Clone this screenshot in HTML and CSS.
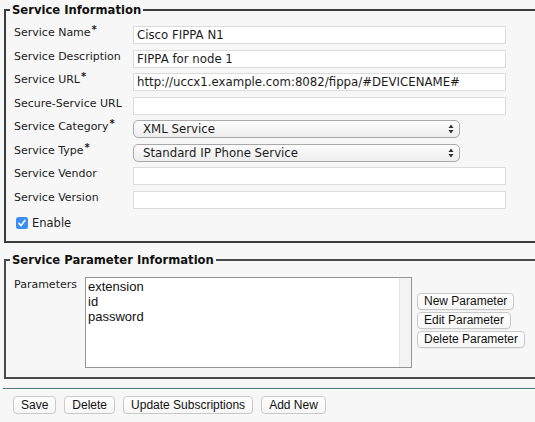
FILE: index.html
```html
<!DOCTYPE html>
<html lang="en">
    <head>
        <meta charset="UTF-8">
        <link rel="stylesheet" href="styles.css">
    </head>
    <body>
        <form class="service-form" action="#">
            <!-- Basic service settings -->
            <fieldset class="group">
                <legend>Service Information</legend>
                <div class="form-grid">
                    <label class="field-label">Service Name<span class="req">*</span></label>
                    <input class="text-input" type="text" value="Cisco FIPPA N1">

                    <label class="field-label">Service Description</label>
                    <input class="text-input" type="text" value="FIPPA for node 1">

                    <label class="field-label">Service URL<span class="req">*</span></label>
                    <input class="text-input" type="text" value="http://uccx1.example.com:8082/fippa/#DEVICENAME#">

                    <label class="field-label">Secure-Service URL</label>
                    <input class="text-input" type="text" value="">

                    <label class="field-label">Service Category<span class="req">*</span></label>
                    <div class="select-box">
                        <span>XML Service</span>
                        <svg class="select-arrows" width="6" height="10" viewBox="0 0 6 10">
                            <path d="M0.5 4 L3 0.6 L5.5 4 Z M0.5 6 L3 9.4 L5.5 6 Z" fill="#333"/>
                        </svg>
                    </div>

                    <label class="field-label">Service Type<span class="req">*</span></label>
                    <div class="select-box">
                        <span>Standard IP Phone Service</span>
                        <svg class="select-arrows" width="6" height="10" viewBox="0 0 6 10">
                            <path d="M0.5 4 L3 0.6 L5.5 4 Z M0.5 6 L3 9.4 L5.5 6 Z" fill="#333"/>
                        </svg>
                    </div>

                    <label class="field-label">Service Vendor</label>
                    <input class="text-input" type="text" value="">

                    <label class="field-label">Service Version</label>
                    <input class="text-input" type="text" value="">

                    <div class="check-row">
                        <svg class="checkbox" width="12" height="12" viewBox="0 0 12 12">
                            <rect x="0" y="0" width="12" height="12" rx="2.5" fill="#3b8ef5"/>
                            <path d="M3 6.4 L5.1 8.6 L9 3.3" fill="none" stroke="#fff" stroke-width="1.6" stroke-linecap="round" stroke-linejoin="round"/>
                        </svg>
                        <span>Enable</span>
                    </div>
                </div>
            </fieldset>

            <!-- Parameters attached to the service -->
            <fieldset class="group group-params">
                <legend>Service Parameter Information</legend>
                <div class="param-row">
                    <label class="field-label">Parameters</label>
                    <div class="listbox">
                        <div class="list-items">
                            <div>extension</div>
                            <div>id</div>
                            <div>password</div>
                        </div>
                        <div class="list-track"></div>
                    </div>
                    <div class="param-buttons">
                        <button type="button" class="btn">New Parameter</button>
                        <button type="button" class="btn">Edit Parameter</button>
                        <button type="button" class="btn">Delete Parameter</button>
                    </div>
                </div>
            </fieldset>

            <div class="action-bar">
                <button type="button" class="btn">Save</button>
                <button type="button" class="btn">Delete</button>
                <button type="button" class="btn">Update Subscriptions</button>
                <button type="button" class="btn">Add New</button>
            </div>
        </form>
    </body>
</html>
```

FILE: styles.css
```css
html {
    background-color: #f7f7f7;
}

body {
    margin: 0;
    padding: 3px 0 0 3px;
    overflow-x: hidden;
    font-family: "DejaVu Sans", Verdana, sans-serif;
    font-size: 11px;
    color: #1c1c1c;
}

.service-form {
    width: 600px;
}

.group {
    margin: 0 0 0 1px;
    padding: 9px 8px 11px 8px;
    border: 2px solid #3c3c3c;
    min-width: 0;
}

.group legend {
    margin-left: -4px;
    padding: 0 2px;
    font-size: 11.6px;
    font-weight: bold;
    line-height: 14px;
    color: #111;
}

.group-params {
    margin-top: 10px;
    padding-top: 10px;
    padding-bottom: 9px;
    border-color: #4a4a4a;
}

.form-grid {
    display: grid;
    grid-template-columns: 119px 373px;
    row-gap: 5.5px;
    align-items: start;
}

.field-label {
    line-height: 14px;
    white-space: nowrap;
}

.req {
    font-size: 10px;
    font-weight: bold;
    vertical-align: 3px;
    margin-left: 1px;
    line-height: 0;
}

.text-input {
    box-sizing: border-box;
    width: 373px;
    height: 18px;
    margin: 0;
    padding: 0 3px;
    border: 1px solid #dcdcdc;
    background-color: #fff;
    font-family: "DejaVu Sans", Verdana, sans-serif;
    font-size: 11.75px;
    color: #1c1c1c;
    outline: none;
}

.select-box {
    box-sizing: border-box;
    width: 327px;
    height: 18px;
    display: flex;
    align-items: center;
    justify-content: space-between;
    padding: 0 5px 0 9px;
    border: 1px solid #a9a9a9;
    border-radius: 5px;
    background: linear-gradient(#fdfdfd, #ededed);
    font-size: 11.75px;
}

.check-row {
    grid-column: 1 / 3;
    display: flex;
    align-items: center;
    gap: 4px;
    margin-top: 2px;
    padding-left: 2px;
    height: 14px;
    font-size: 11.5px;
}

.param-row {
    display: grid;
    grid-template-columns: 71px 327px auto;
    align-items: start;
}

.param-row .field-label {
    padding-top: 1px;
}

.listbox {
    box-sizing: border-box;
    height: 91px;
    display: flex;
    border: 1px solid #959595;
    background-color: #fff;
}

.list-items {
    flex: 1;
    padding: 1px 0 0 2px;
    font-family: "Liberation Sans", Arial, sans-serif;
    font-size: 13px;
    line-height: 15px;
    color: #111;
}

.list-track {
    width: 11px;
    border-left: 1px solid #e4e4e4;
    background-color: #f3f3f3;
}

.param-buttons {
    display: flex;
    flex-direction: column;
    align-items: flex-start;
    gap: 2px;
    padding: 16px 0 0 5px;
}

.btn {
    height: 17px;
    margin: 0;
    padding: 0 6px;
    border: 1px solid #c9c9c9;
    border-radius: 4px;
    background: linear-gradient(#ffffff, #f6f6f6);
    box-shadow: 0 0.5px 0 rgba(0, 0, 0, 0.08);
    font-family: "Liberation Sans", Arial, sans-serif;
    font-size: 12px;
    line-height: 15px;
    color: #111;
}

.action-bar {
    display: flex;
    gap: 8px;
    margin-top: 9px;
    padding: 7px 0 0 10px;
    border-top: 1px solid #587a7a;
}

.action-bar .btn {
    height: 18px;
    padding: 0 7px;
}
```
